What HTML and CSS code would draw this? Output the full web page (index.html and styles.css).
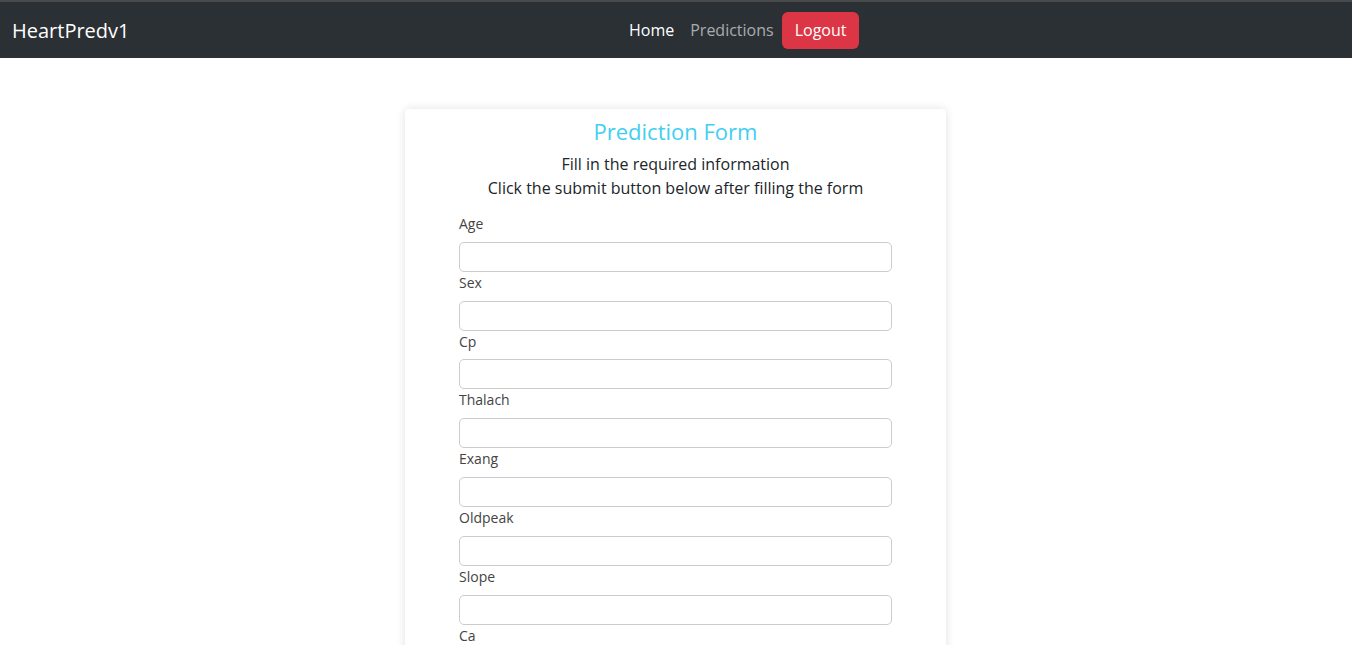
FILE: index.html
```html
<!DOCTYPE html>
<html lang="en">
<head>
<meta charset="utf-8">
<title>HeartPredv1</title>
<link rel="stylesheet" href="styles.css">
</head>
<body>
<header class="navbar">
  <a class="brand" href="#">HeartPredv1</a>
  <nav class="nav">
    <a class="nav-link active" href="#">Home</a>
    <a class="nav-link" href="#">Predictions</a>
    <a class="btn-logout" href="#">Logout</a>
  </nav>
</header>
<main class="page">
  <section class="card">
    <h3 class="card-title">Prediction Form</h3>
    <p class="intro">Fill in the required information<br>Click the submit button below after filling the form</p>
    <form class="form">
      <label class="field"><span class="label">Age</span><input type="text"></label>
      <label class="field"><span class="label">Sex</span><input type="text"></label>
      <label class="field"><span class="label">Cp</span><input type="text"></label>
      <label class="field"><span class="label">Thalach</span><input type="text"></label>
      <label class="field"><span class="label">Exang</span><input type="text"></label>
      <label class="field"><span class="label">Oldpeak</span><input type="text"></label>
      <label class="field"><span class="label">Slope</span><input type="text"></label>
      <label class="field"><span class="label">Ca</span><input type="text"></label>
      <label class="field"><span class="label">Thal</span><input type="text"></label>
      <button class="submit" type="button">Submit</button>
    </form>
  </section>
</main>
</body>
</html>
```
FILE: styles.css
```css
* { box-sizing: border-box; }
html, body { margin: 0; padding: 0; }
body {
  font-family: "Open Sans", "Noto Sans", sans-serif;
  color: #212529;
  background: #fff;
}
.navbar {
  height: 58px;
  border-top: 2px solid #4a4a4a;
  background: #2b3035;
  display: flex;
  align-items: center;
  padding: 0 12px;
}
.brand {
  color: #fff;
  font-size: 20px;
  text-decoration: none;
  margin-right: 16px;
}
.nav {
  flex: 1;
  display: flex;
  align-items: center;
  justify-content: center;
  padding-right: 5px;
}
.nav-link {
  color: rgba(255,255,255,.6);
  text-decoration: none;
  font-size: 16px;
  padding: 8px 8px;
}
.nav-link.active { color: #fff; }
.btn-logout {
  background: #dc3545;
  color: #fff;
  text-decoration: none;
  font-size: 16px;
  line-height: 24px;
  padding: 6px 13px 7px;
  border-radius: 6px;
}
.page {
  display: flex;
  justify-content: center;
  padding-top: 51px;
  padding-right: 1px;
}
.card {
  width: 541px;
  background: #fff;
  border-radius: 4px;
  box-shadow: 0 0 10px rgba(0,0,0,.12);
  padding: 9px 54px 30px 54px;
}
.card-title {
  margin: 0 0 8px;
  text-align: center;
  color: #3fcff2;
  font-weight: 400;
  font-size: 22px;
  line-height: 26px;
}
.intro {
  margin: 0 0 13px;
  text-align: center;
  font-size: 16px;
  line-height: 24px;
  color: #212529;
}
.form { display: flex; flex-direction: column; }
.field { display: flex; flex-direction: column; }
.label {
  font-size: 14px;
  line-height: 21px;
  color: #444;
  margin-bottom: 7.83px;
}
.field input {
  height: 30px;
  border: 1px solid #ccc;
  border-radius: 5px;
  font: inherit;
  padding: 4px 8px;
  width: 433px;
}
.submit {
  margin-top: 16px;
  align-self: flex-start;
  background: #0d6efd;
  color: #fff;
  border: 0;
  border-radius: 5px;
  font: inherit;
  padding: 6px 12px;
}
```
